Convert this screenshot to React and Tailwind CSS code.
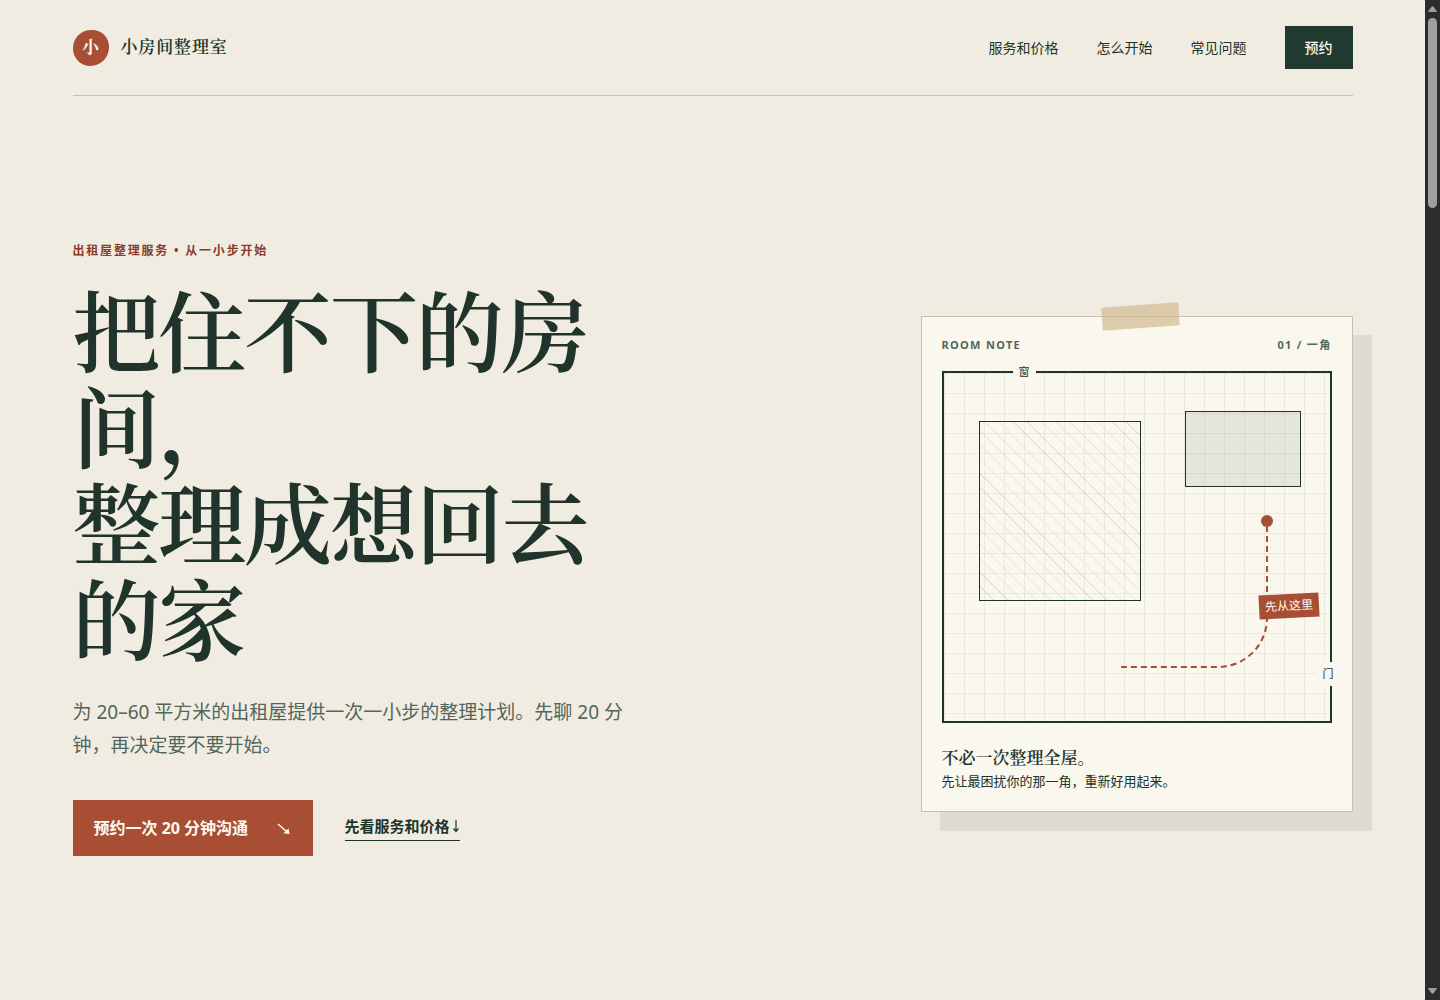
const serif = 'font-["Liberation_Serif","Noto_Serif_CJK_SC","Noto_Sans_CJK_SC",serif]';

const navLinks = [
  { label: '服务和价格', href: '#services' },
  { label: '怎么开始', href: '#start' },
  { label: '常见问题', href: '#faq' },
];

function Header() {
  return (
    <header className="flex items-center justify-between border-b border-[#cabfae] py-[26px]">
      <a href="#top" className="flex items-center gap-3">
        <span className={`grid size-9 place-items-center rounded-[50%_46%_52%_48%] bg-[#a84e35] text-[17px] font-bold text-[#faf7ef] ${serif}`}>
          小
        </span>
        <span className={`text-[17px] font-semibold tracking-wider ${serif}`}>小房间整理室</span>
      </a>
      <nav className="flex items-center gap-[38px] text-sm">
        {navLinks.map((link) => (
          <a key={link.href} href={link.href}>{link.label}</a>
        ))}
        <a href="#book" className="bg-[#203a2f] px-5 py-[11px] font-medium leading-[21px] text-[#faf7ef]">
          预约
        </a>
      </nav>
    </header>
  );
}

function Intro() {
  return (
    <div className="max-w-[560px]">
      <p className="text-xs font-bold leading-5 tracking-[0.15em] text-[#8b3a29]">出租屋整理服务 • 从一小步开始</p>
      <h1 className={`mt-[27px] text-[88px] font-semibold leading-[96px] tracking-tight ${serif}`}>
        把住不下的房间，
        <br />
        整理成想回去的家
      </h1>
      <p className="mt-6 text-[19px] leading-[33px] text-[#53665b]">
        为 20–60 平方米的出租屋提供一次一小步的整理计划。先聊 20 分钟，再决定要不要开始。
      </p>
      <div className="mt-[38px] flex items-center gap-8">
        <a href="#book" className="flex h-14 w-60 items-center justify-between bg-[#a84e35] px-[21px] font-bold text-[#fffaf2]">
          <span>预约一次 20 分钟沟通</span>
          <svg viewBox="0 0 16 16" className="size-4" fill="none" stroke="currentColor" strokeWidth="1.6" aria-hidden="true">
            <path d="M2 4 L10.5 11.5" />
            <path d="M13.5 14 L7.5 13.2 L12.6 8.2 Z" fill="currentColor" stroke="none" />
          </svg>
        </a>
        <a href="#services" className="flex items-center gap-0.5 border-b border-[#20342b] pb-0.5 text-[15px] font-bold leading-6">
          <span>先看服务和价格</span>
          <svg viewBox="0 0 8 14" className="h-3.5 w-2" fill="none" stroke="currentColor" strokeWidth="1.2" aria-hidden="true">
            <path d="M4 1 V12.5 M1.5 9.5 L4 12.5 L6.5 9.5" />
          </svg>
        </a>
      </div>
    </div>
  );
}

function FloorPlan() {
  return (
    <div className="relative h-[352px] border-2 border-[#20342b] bg-[linear-gradient(rgba(32,52,43,0.07)_1px,transparent_1px),linear-gradient(90deg,rgba(32,52,43,0.07)_1px,transparent_1px)] bg-size-[20px_20px]">
      <div className="absolute left-[35px] top-[48px] h-[180px] w-[162px] border border-[#20342b] bg-[repeating-linear-gradient(45deg,transparent_0_9px,rgba(168,78,53,0.14)_9px_10px)]" />
      <div className="absolute right-[29px] top-[38px] h-[76px] w-[116px] border border-[#20342b] bg-[rgba(32,58,47,0.09)]" />
      <div className="absolute bottom-[53px] right-[62px] h-[146px] w-[147px] rounded-br-[50px] border-b-2 border-r-2 border-dashed border-[#a84e35]" />
      <div className="absolute right-[57px] top-[142px] size-3 rounded-full bg-[#a84e35]" />
      <span className="absolute right-2.5 top-[221px] -rotate-3 bg-[#a84e35] px-1.5 text-xs leading-6 text-[#fffaf2]">先从这里</span>
      <span className="absolute -top-[13px] left-[69px] bg-[#faf7ef] px-1.5 text-[11px] leading-6">窗</span>
      <span className="absolute -right-2.5 top-[289px] bg-[#faf7ef] px-1.5 text-[11px] leading-6">门</span>
    </div>
  );
}

function RoomNote() {
  return (
    <div className="pt-8">
      <article className="relative w-[432px] border border-[#c8c0af] bg-[#faf7ef] p-5 shadow-[19px_19px_0_#dedcd0]">
        <div className="absolute -top-3 left-[180px] h-[23px] w-[77px] -rotate-4 bg-[#d2bb91]/70" />
        <div className="mb-[18px] flex justify-between text-[11px] font-bold leading-4 tracking-[0.12em] text-[#53665b]">
          <span>ROOM NOTE</span>
          <span>01 / 一角</span>
        </div>
        <FloorPlan />
        <h2 className={`mt-6 text-[17px] font-semibold leading-6 ${serif}`}>不必一次整理全屋。</h2>
        <p className="text-[13px] leading-5">先让最困扰你的那一角，重新好用起来。</p>
      </article>
    </div>
  );
}

function ScrollRail() {
  return (
    <div className="sticky top-0 flex h-screen w-[15px] shrink-0 flex-col items-center bg-[#2c2c2c]" aria-hidden="true">
      <svg viewBox="0 0 9 6" className="mt-1.5 h-1.5 w-[9px] shrink-0" fill="#9f9f9f"><path d="M3.8 0.5 Q4.5 -0.3 5.2 0.5 L8.8 5 Q9 6 8 6 H1 Q0 6 0.2 5 Z" /></svg>
      <div className="mt-1.5 h-[190px] w-[9px] rounded-full bg-[#9f9f9f]" />
      <svg viewBox="0 0 9 6" className="mb-1.5 mt-auto h-1.5 w-[9px] shrink-0" fill="#9f9f9f"><path d="M3.8 5.5 Q4.5 6.3 5.2 5.5 L8.8 1 Q9 0 8 0 H1 Q0 0 0.2 1 Z" /></svg>
    </div>
  );
}

export default function App() {
  return (
    <div className='flex bg-[#f1ece1] font-["Noto_Sans","Noto_Sans_CJK_SC",sans-serif] text-[#20342b]' lang="zh-CN">
      <div id="top" className="mx-auto flex min-h-screen max-w-[1280px] flex-1 flex-col">
        <Header />
        <main className="flex flex-1 items-center justify-between gap-12">
          <Intro />
          <RoomNote />
        </main>
      </div>
      <ScrollRail />
    </div>
  );
}
